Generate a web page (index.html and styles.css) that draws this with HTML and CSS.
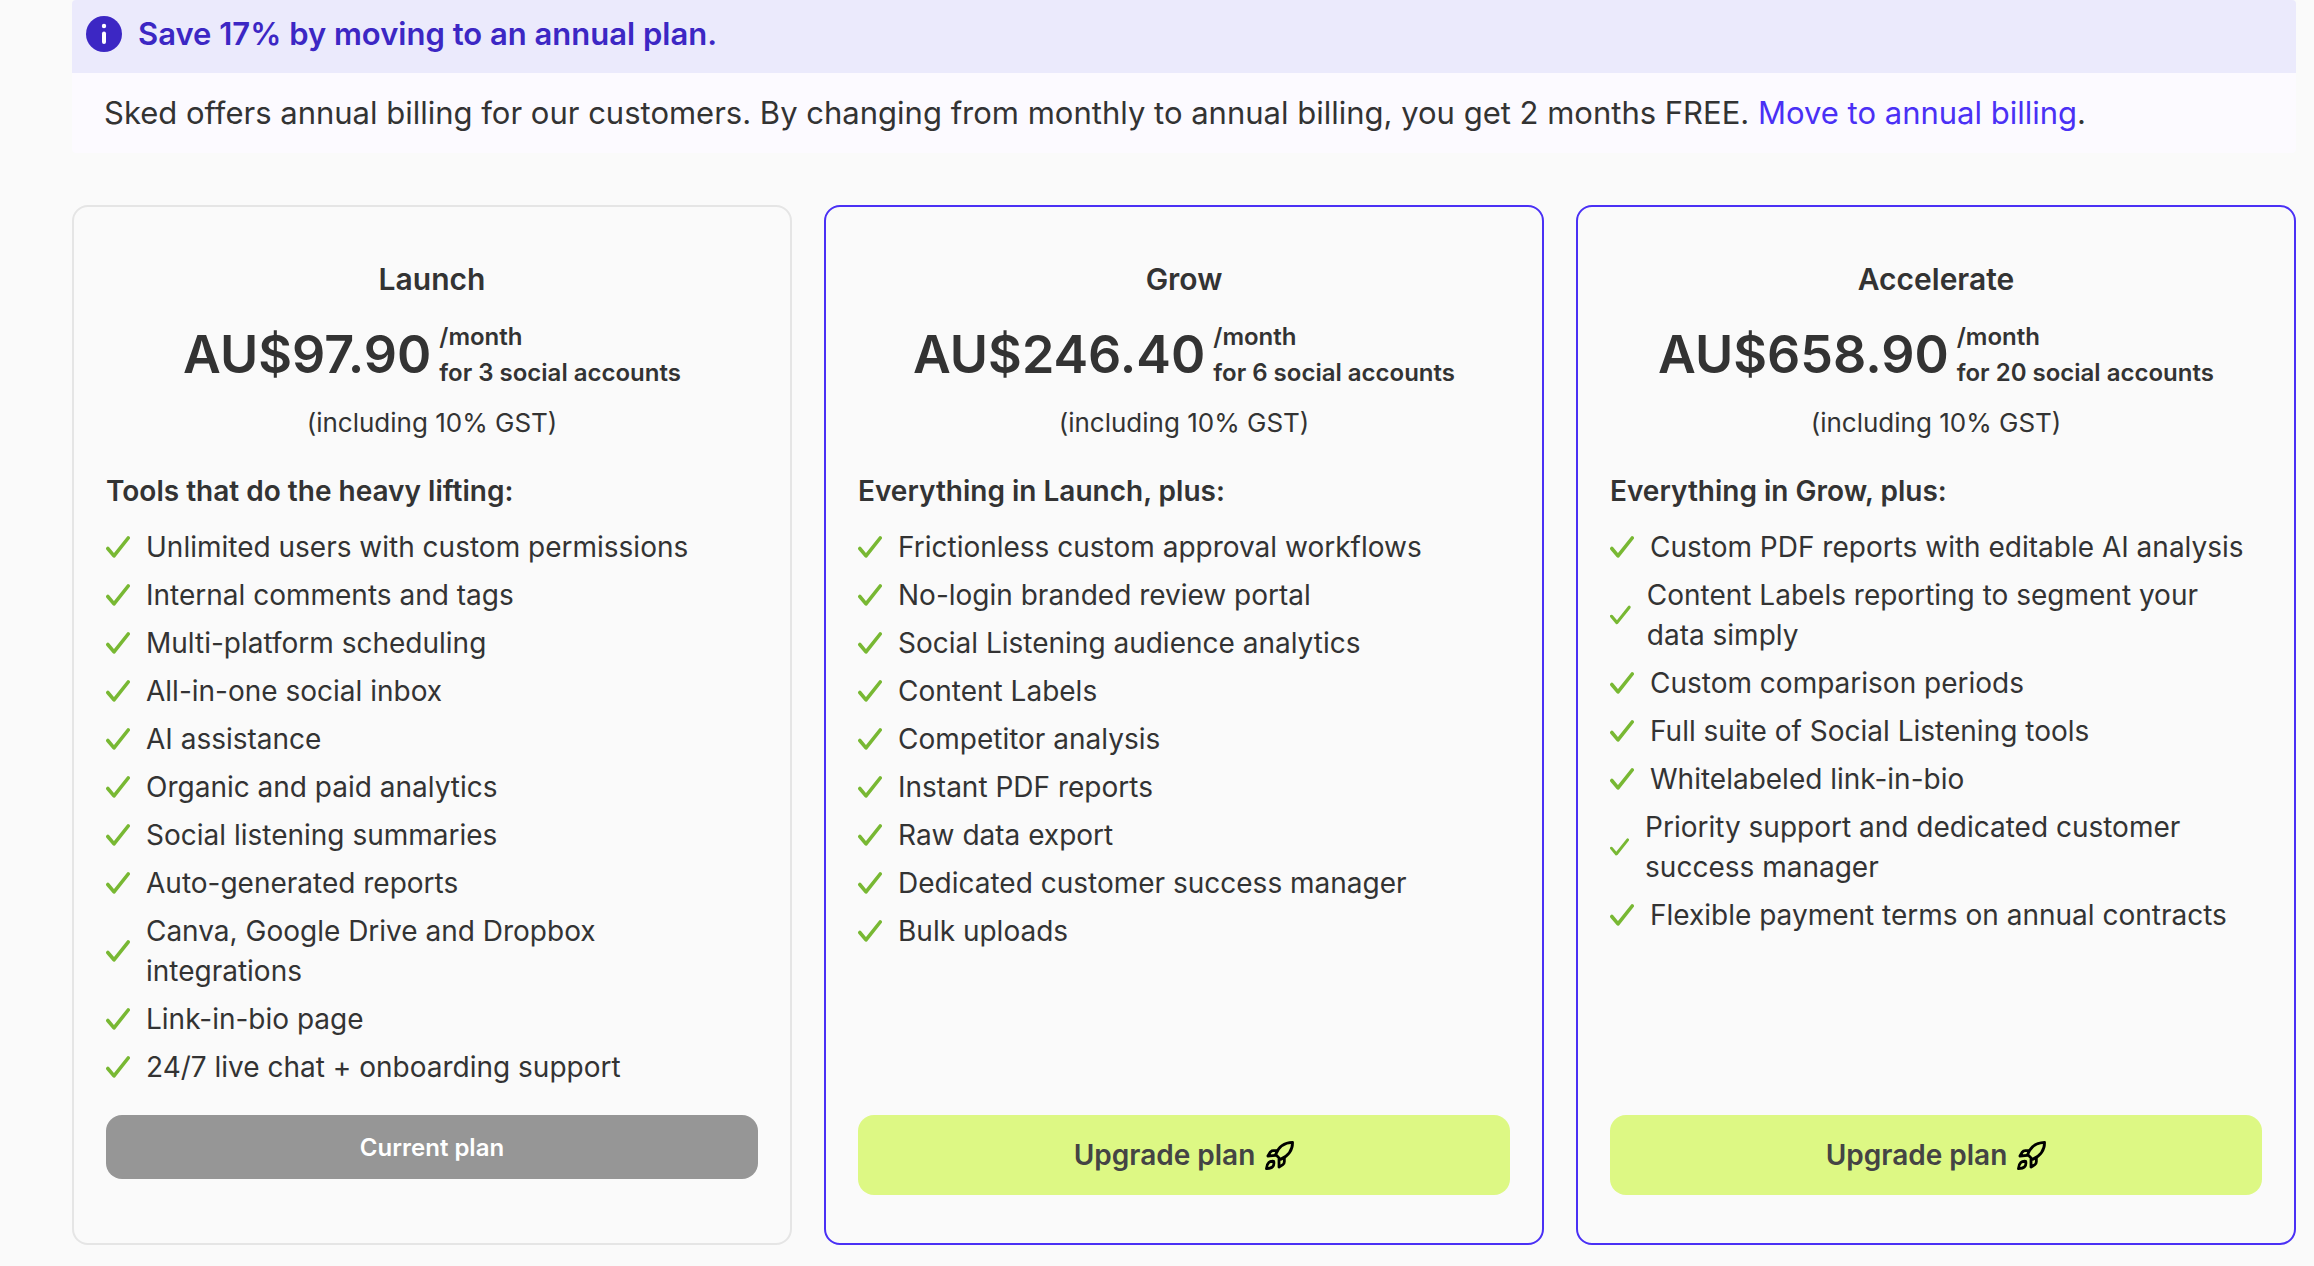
FILE: index.html
```html
<!DOCTYPE html>
<html lang="en">
<head>
    <meta charset="UTF-8">
    <meta name="viewport" content="width=device-width, initial-scale=1.0">
    <title>Plans</title>
    <link rel="stylesheet" href="styles.css">
</head>
<body>
    <!-- Shared icons -->
    <svg class="sprite" aria-hidden="true">
        <symbol id="check" viewBox="0 0 24 22">
            <path d="M1.8 12.5L8 19.8L22.2 2" fill="none" stroke="#78b833" stroke-width="3.6" stroke-linecap="round" stroke-linejoin="round"/>
        </symbol>
        <symbol id="rocket" viewBox="0 0 30 30">
            <g fill="none" stroke="#000" stroke-width="2.9" stroke-linecap="round" stroke-linejoin="round">
                <path d="M11 14C14 6 20 1.8 28.5 1.5C28.5 9.5 24 15.5 16 19Z"/>
                <path d="M12 10H8.5Q6.5 10 5.5 11.5L3 15.5L10.8 14.8"/>
                <path d="M20 17.5V21.5Q20 23.5 18.5 24.5L14.5 27V19"/>
                <path d="M9 21C5 20.500 2 22.500 1.5 28.5C7.500 28.5 10 26 9 21Z"/>
            </g>
        </symbol>
    </svg>

    <div class="container">
        <section class="banner">
            <div class="banner-header">
                <svg class="info-icon" viewBox="0 0 36 36" aria-hidden="true">
                    <circle cx="18" cy="18" r="18" fill="#3c27c4"/>
                    <circle cx="18" cy="10" r="2.2" fill="#fff"/>
                    <path d="M18 17.500V26" stroke="#fff" stroke-width="4" stroke-linecap="round"/>
                </svg>
                <h2>Save 17% by moving to an annual plan.</h2>
            </div>
            <p class="banner-body">Sked offers annual billing for our customers. By changing from monthly to annual billing, you get 2 months FREE. <a href="#">Move to annual billing</a>.</p>
        </section>

        <div class="plans">
            <section class="plan">
                <h3>Launch</h3>
                <div class="price">
                    <span class="amount">AU$97.90</span>
                    <span class="period">/month<br>for 3 social accounts</span>
                </div>
                <p class="tax">(including 10% GST)</p>
                <h4>Tools that do the heavy lifting:</h4>
                <ul>
                    <li><svg><use href="#check"/></svg><span>Unlimited users with custom permissions</span></li>
                    <li><svg><use href="#check"/></svg><span>Internal comments and tags</span></li>
                    <li><svg><use href="#check"/></svg><span>Multi-platform scheduling</span></li>
                    <li><svg><use href="#check"/></svg><span>All-in-one social inbox</span></li>
                    <li><svg><use href="#check"/></svg><span>AI assistance</span></li>
                    <li><svg><use href="#check"/></svg><span>Organic and paid analytics</span></li>
                    <li><svg><use href="#check"/></svg><span>Social listening summaries</span></li>
                    <li><svg><use href="#check"/></svg><span>Auto-generated reports</span></li>
                    <li><svg><use href="#check"/></svg><span>Canva, Google Drive and Dropbox integrations</span></li>
                    <li><svg><use href="#check"/></svg><span>Link-in-bio page</span></li>
                    <li><svg><use href="#check"/></svg><span>24/7 live chat + onboarding support</span></li>
                </ul>
                <div class="plan-footer">
                    <button type="button" class="button button-current" disabled>Current plan</button>
                </div>
            </section>

            <section class="plan plan-upgrade">
                <h3>Grow</h3>
                <div class="price">
                    <span class="amount">AU$246.40</span>
                    <span class="period">/month<br>for 6 social accounts</span>
                </div>
                <p class="tax">(including 10% GST)</p>
                <h4>Everything in Launch, plus:</h4>
                <ul>
                    <li><svg><use href="#check"/></svg><span>Frictionless custom approval workflows</span></li>
                    <li><svg><use href="#check"/></svg><span>No-login branded review portal</span></li>
                    <li><svg><use href="#check"/></svg><span>Social Listening audience analytics</span></li>
                    <li><svg><use href="#check"/></svg><span>Content Labels</span></li>
                    <li><svg><use href="#check"/></svg><span>Competitor analysis</span></li>
                    <li><svg><use href="#check"/></svg><span>Instant PDF reports</span></li>
                    <li><svg><use href="#check"/></svg><span>Raw data export</span></li>
                    <li><svg><use href="#check"/></svg><span>Dedicated customer success manager</span></li>
                    <li><svg><use href="#check"/></svg><span>Bulk uploads</span></li>
                </ul>
                <div class="plan-footer">
                    <button type="button" class="button button-upgrade">Upgrade plan <svg class="rocket"><use href="#rocket"/></svg></button>
                </div>
            </section>

            <section class="plan plan-upgrade">
                <h3>Accelerate</h3>
                <div class="price">
                    <span class="amount">AU$658.90</span>
                    <span class="period">/month<br>for 20 social accounts</span>
                </div>
                <p class="tax">(including 10% GST)</p>
                <h4>Everything in Grow, plus:</h4>
                <ul>
                    <li><svg><use href="#check"/></svg><span>Custom PDF reports with editable AI analysis</span></li>
                    <li><svg><use href="#check"/></svg><span>Content Labels reporting to segment your data simply</span></li>
                    <li><svg><use href="#check"/></svg><span>Custom comparison periods</span></li>
                    <li><svg><use href="#check"/></svg><span>Full suite of Social Listening tools</span></li>
                    <li><svg><use href="#check"/></svg><span>Whitelabeled link-in-bio</span></li>
                    <li><svg><use href="#check"/></svg><span>Priority support and dedicated customer success manager</span></li>
                    <li><svg><use href="#check"/></svg><span>Flexible payment terms on annual contracts</span></li>
                </ul>
                <div class="plan-footer">
                    <button type="button" class="button button-upgrade">Upgrade plan <svg class="rocket"><use href="#rocket"/></svg></button>
                </div>
            </section>
        </div>
    </div>
</body>
</html>
```

FILE: styles.css
```css
* {
    box-sizing: border-box;
}

body {
    font-family: Inter, "Liberation Sans", sans-serif;
    background-color: #fafafa;
    color: #333;
    margin: 0;
}

h2, h3, h4, p, ul {
    margin: 0;
    padding: 0;
}

.sprite {
    position: absolute;
    width: 0;
    height: 0;
}

.container {
    padding: 0 18px 20px 72px;
}

.banner {
    background-color: #fcfaff;
    border-radius: 4px;
    overflow: hidden;
    margin-bottom: 52px;
}

.banner-header {
    display: flex;
    align-items: center;
    gap: 16px;
    padding: 14px 14px 19px;
    background-color: #ebeafc;
    color: #3c27c4;
}

.info-icon {
    width: 36px;
    height: 36px;
}

.banner-header h2 {
    font-size: 31px;
    font-weight: 600;
    line-height: 40px;
}

.banner-body {
    padding: 20px 32px;
    font-size: 31px;
    line-height: 40px;
}

.banner-body a {
    color: #4a30f5;
    text-decoration: none;
}

.plans {
    display: grid;
    grid-template-columns: repeat(3, 1fr);
    gap: 32px;
}

.plan {
    display: flex;
    flex-direction: column;
    padding: 52px 32px 48px;
    border: 2px solid #e5e5e5;
    border-radius: 16px;
}

.plan-upgrade {
    border-color: #4a30f5;
}

.plan h3 {
    font-size: 30px;
    font-weight: 600;
    line-height: 40px;
    text-align: center;
}

.price {
    display: flex;
    justify-content: center;
    align-items: center;
    gap: 8px;
    margin: 20px 0 14px;
}

.amount {
    font-size: 52px;
    font-weight: 600;
    line-height: 72px;
}

.period {
    font-size: 24px;
    font-weight: 600;
    line-height: 36px;
}

.tax {
    font-size: 26px;
    line-height: 36px;
    text-align: center;
}

.plan h4 {
    margin: 30px 0 16px;
    font-size: 28px;
    font-weight: 600;
    line-height: 40px;
}

.plan ul {
    display: flex;
    flex-direction: column;
    gap: 8px;
    margin-bottom: 28px;
    list-style: none;
    font-size: 28px;
    line-height: 40px;
}

.plan li {
    display: flex;
    align-items: center;
    gap: 16px;
}

.plan li svg {
    width: 24px;
    height: 22px;
    min-width: 0;
}

.plan-footer {
    min-height: 80px;
    margin-top: auto;
}

.button {
    display: flex;
    justify-content: center;
    align-items: center;
    gap: 10px;
    width: 100%;
    border: none;
    border-radius: 16px;
    font-family: inherit;
    font-weight: 600;
}

.button-current {
    height: 64px;
    background-color: #969696;
    color: #fff;
    font-size: 24px;
}

.button-upgrade {
    height: 80px;
    background-color: #ddf884;
    color: #444;
    font-size: 28px;
    cursor: pointer;
}

.rocket {
    width: 29px;
    height: 29px;
}
```
